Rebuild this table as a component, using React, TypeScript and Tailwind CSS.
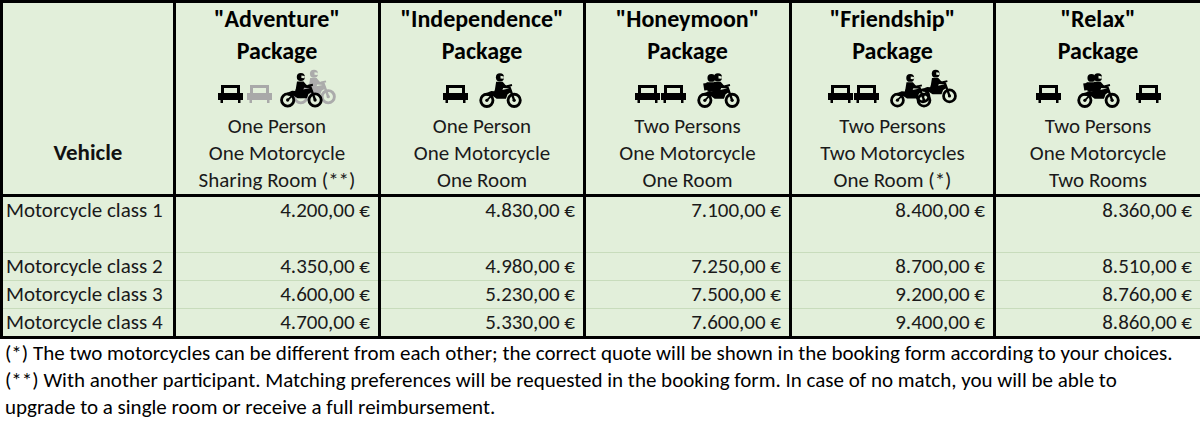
import React from "react";

const FONT = { fontFamily: "Carlito, Calibri, Lato, 'Liberation Sans', sans-serif" };

function Bed({ fill = "#000" }: { fill?: string }) {
  return (
    <svg width="25" height="18" viewBox="0 0 25 18">
      <path
        d="M3 0 H22 V8 H25 V15 H22.5 V18 H20 V15 H5 V18 H2.5 V15 H0 V8 H3 Z M6 3 V8 H19 V3 Z"
        fill={fill}
        fillRule="evenodd"
      />
    </svg>
  );
}

function MotoShape({ fill, passenger = false }: { fill: string; passenger?: boolean }) {
  return (
    <g>
      <circle cx="7" cy="25" r="5.6" fill="none" stroke={fill} strokeWidth="2.6" />
      <circle cx="7" cy="25" r="1.5" fill={fill} />
      <circle cx="32" cy="25" r="5.6" fill="none" stroke={fill} strokeWidth="2.6" />
      <circle cx="32" cy="25" r="1.5" fill={fill} />
      <path d="M32 25 L27.5 12.5" stroke={fill} strokeWidth="2.2" />
      <path d="M25.5 12 L30 11" stroke={fill} strokeWidth="1.8" />
      <path
        d="M4 19.5 L11 16.5 L17 17 L21 15.5 L28 14 L30 17 L26 19.5 L24.5 23.5 L16 23.5 L12.5 21 L8 21 Z"
        fill={fill}
      />
      <path d="M7 25 L12 20" stroke={fill} strokeWidth="1.6" />
      {passenger && (
        <g>
          <circle cx="13" cy="4.5" r="3.6" fill={fill} />
          <path d="M8.5 8.5 L15.5 8.5 L17 16.5 L9.5 17 Z" fill={fill} />
          <path d="M5.5 9.5 L10 8.8 L10.5 15.5 L6.5 16 Z" fill={fill} />
        </g>
      )}
      <circle cx="19" cy="4" r="3.7" fill={fill} />
      <path d="M15.5 8 L21.5 8 L24 11 L28 12.2 L27.6 14.2 L22 13.8 L20.5 17.5 L14 17.5 Z" fill={fill} />
      <path d="M14.5 15 L21.8 16 L22.8 21.5 L20.2 22 L19.5 18.8 L13.5 18.5 Z" fill={fill} />
      <path d="M19.5 2.6 L22.6 3.2 L22.4 5.2 L19.5 5.0 Z" fill="#e2efda" />
    </g>
  );
}

function Moto({ passenger = false }: { passenger?: boolean }) {
  return (
    <svg width="43" height="35" viewBox="0 0 39 32">
      <MotoShape fill="#000" passenger={passenger} />
    </svg>
  );
}

function MotoGhost() {
  return (
    <svg width="57" height="39" viewBox="0 -3 52 35">
      <g transform="translate(12,-3)">
        <MotoShape fill="#ababab" />
      </g>
      <MotoShape fill="#000" />
    </svg>
  );
}

function MotoTwo() {
  return (
    <svg width="68" height="39" viewBox="0 -4 64 36">
      <g transform="translate(24,-4)">
        <MotoShape fill="#000" />
      </g>
      <MotoShape fill="#000" />
    </svg>
  );
}

type Pkg = {
  name: string;
  icons: React.ReactNode;
  lines: string[];
  prices: string[];
};

const packages: Pkg[] = [
  {
    name: '"Adventure"',
    icons: (
      <div className="flex items-end">
        <div className="mb-[5px] flex gap-[4px]">
          <Bed />
          <Bed fill="#a9a9a9" />
        </div>
        <div className="ml-[8px]">
          <MotoGhost />
        </div>
      </div>
    ),
    lines: ["One Person", "One Motorcycle", "Sharing Room (**)"],
    prices: ["4.200,00 €", "4.350,00 €", "4.600,00 €", "4.700,00 €"],
  },
  {
    name: '"Independence"',
    icons: (
      <div className="flex items-end gap-[11px]">
        <div className="mb-[5px]">
          <Bed />
        </div>
        <Moto />
      </div>
    ),
    lines: ["One Person", "One Motorcycle", "One Room"],
    prices: ["4.830,00 €", "4.980,00 €", "5.230,00 €", "5.330,00 €"],
  },
  {
    name: '"Honeymoon"',
    icons: (
      <div className="flex items-end gap-[11px]">
        <div className="mb-[5px] flex gap-[1px]">
          <Bed />
          <Bed />
        </div>
        <Moto passenger />
      </div>
    ),
    lines: ["Two Persons", "One Motorcycle", "One Room"],
    prices: ["7.100,00 €", "7.250,00 €", "7.500,00 €", "7.600,00 €"],
  },
  {
    name: '"Friendship"',
    icons: (
      <div className="flex items-end gap-[11px]">
        <div className="mb-[5px] flex gap-[1px]">
          <Bed />
          <Bed />
        </div>
        <MotoTwo />
      </div>
    ),
    lines: ["Two Persons", "Two Motorcycles", "One Room (*)"],
    prices: ["8.400,00 €", "8.700,00 €", "9.200,00 €", "9.400,00 €"],
  },
  {
    name: '"Relax"',
    icons: (
      <div className="flex items-end gap-[16px]">
        <div className="mb-[5px]">
          <Bed />
        </div>
        <Moto passenger />
        <div className="mb-[5px]">
          <Bed />
        </div>
      </div>
    ),
    lines: ["Two Persons", "One Motorcycle", "Two Rooms"],
    prices: ["8.360,00 €", "8.510,00 €", "8.760,00 €", "8.860,00 €"],
  },
];

const widths = ["w-[173px]", "w-[205px]", "w-[205px]", "w-[206px]", "w-[204px]", "w-[207px]"];

export default function App() {
  return (
    <div className="w-[1200px] h-[441px] bg-white text-[#111]" style={FONT}>
      <table className="w-[1200px] table-fixed border-collapse">
        <colgroup>
          {widths.map((w, i) => (
            <col key={i} className={w} />
          ))}
        </colgroup>
        <thead>
          <tr className="bg-[#e2efda]">
            <th className="border-[3px] border-black align-bottom pb-[28px] text-[23px] font-bold leading-[27px]">
              Vehicle
            </th>
            {packages.map((p) => (
              <th key={p.name} className="border-[3px] border-black p-0 align-top">
                <div className="flex flex-col items-center">
                  <div className="text-[24px] font-bold leading-[32px] text-black">{p.name}</div>
                  <div className="text-[24px] font-bold leading-[32px] text-black">Package</div>
                  <div className="flex h-[46px] items-end justify-center pb-[5px]">{p.icons}</div>
                  {p.lines.map((l) => (
                    <div key={l} className="text-[21px] font-normal leading-[27px] text-[#1a1a1a]">
                      {l}
                    </div>
                  ))}
                </div>
              </th>
            ))}
          </tr>
        </thead>
        <tbody className="text-[21px] leading-[27px] text-[#1a1a1a]">
          {[0, 1, 2, 3].map((r) => (
            <tr
              key={r}
              className={`bg-[#e2efda] ${r === 0 ? "h-[57px]" : r === 2 ? "h-[28px]" : "h-[27px]"} ${
                r === 3 ? "border-b-[3px] border-b-black" : "border-b border-b-[#c8dcbc]"
              }`}
            >
              <td className="border-x-[3px] border-x-black pl-[3px] align-top whitespace-nowrap">
                Motorcycle class {r + 1}
              </td>
              {packages.map((p) => (
                <td
                  key={p.name}
                  className="border-x-[3px] border-x-black pr-[8px] text-right align-top whitespace-nowrap"
                >
                  {p.prices[r]}
                </td>
              ))}
            </tr>
          ))}
        </tbody>
      </table>
      <div className="pl-[5px] pt-[1px] text-[21px] leading-[27px] text-black">
        <div className="whitespace-nowrap">
          (*) The two motorcycles can be different from each other; the correct quote will be shown in the booking
          form according to your choices.
        </div>
        <div className="whitespace-nowrap">
          (**) With another participant. Matching preferences will be requested in the booking form. In case of no
          match, you will be able to
        </div>
        <div className="whitespace-nowrap">upgrade to a single room or receive a full reimbursement.</div>
      </div>
    </div>
  );
}
